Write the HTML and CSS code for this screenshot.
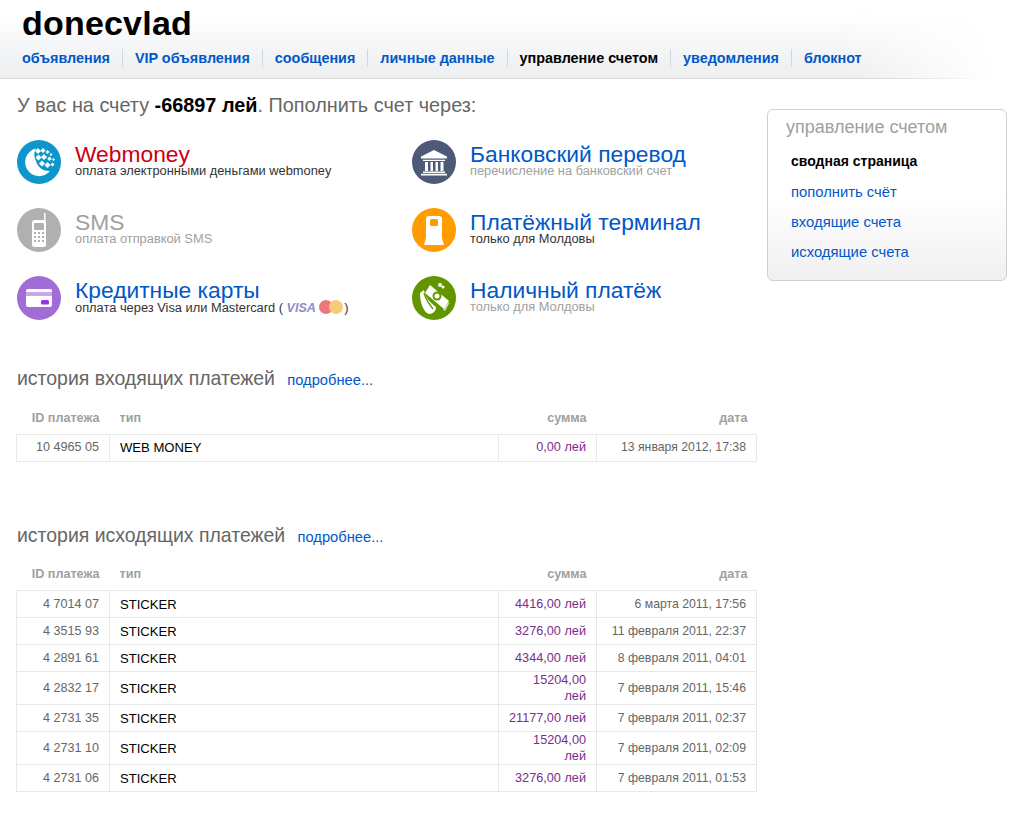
FILE: index.html
```html
<!DOCTYPE html>
<html lang="ru">
<head>
<meta charset="utf-8">
<title>donecvlad</title>
<link rel="stylesheet" href="styles.css">
</head>
<body>
<header class="top">
  <h1 class="user">donecvlad</h1>
  <nav class="nav">
    <a href="#">объявления</a>
    <a href="#">VIP объявления</a>
    <a href="#">сообщения</a>
    <a href="#">личные данные</a>
    <a href="#" class="current">управление счетом</a>
    <a href="#">уведомления</a>
    <a href="#">блокнот</a>
  </nav>
</header>
<div class="page">
  <main class="main">
    <p class="balance">У вас на счету <b>-66897 лей</b>. Пополнить счет через:</p>
    <div class="methods">
      <div class="method">
        <svg class="icon" viewBox="0 0 44 44"><circle cx="22" cy="22" r="22" fill="#0e96cb"/><path d="M19 8.500A14 14 0 1 0 33 31A13 13 0 0 1 19 21A13 13 0 0 1 19 8.500Z" fill="#fff"/><g fill="#fff"><path d="M21 8l3 3-3 3-3-3zM26 8l2.500 2.500-2.500 2.500-2.500-2.500zM30.500 10l2 2-2 2-2-2zM34 13l1.500 1.500-1.500 1.500-1.500-1.500zM21.500 14.500l3 3-3 3-3-3zM27 14l3 3-3 3-3-3zM32.500 16.500l2.300 2.300-2.300 2.300-2.300-2.300zM36.500 18l1.500 1.500-1.500 1.500-1.500-1.500zM25 20.500l3 3-3 3-3-3zM30.500 22l3 3-3 3-3-3zM35.500 22.500l2 2-2 2-2-2z"/></g></svg>
        <div class="method-text"><a href="#" class="method-title red">Webmoney</a><span class="method-sub">оплата электронными деньгами webmoney</span></div>
      </div>
      <div class="method">
        <svg class="icon" viewBox="0 0 44 44"><circle cx="22" cy="22" r="22" fill="#4c5a78"/><path d="M22 10L35 16.500V18.500H9V16.500Z M11 19.800H33V21H11Z M11 31.500H33V33H11Z M9 33.800H35V35.500H9Z" fill="#fff"/><path d="M13 22h3v9h-3zM18.500 22h2.500v9h-2.500zM23.500 22h2.500v9h-2.500zM28.500 22h3v9h-3z" fill="#fff"/></svg>
        <div class="method-text"><a href="#" class="method-title">Банковский перевод</a><span class="method-sub muted">перечисление на банковский счет</span></div>
      </div>
      <div class="method">
        <svg class="icon" viewBox="0 0 44 44"><circle cx="22" cy="22" r="22" fill="#b0b0b0"/><path d="M27 5h1.500v8H27z" fill="#fff"/><rect x="15" y="12" width="14" height="27" rx="2.500" fill="#fff"/><rect x="17" y="15" width="10" height="7" rx="1" fill="#b0b0b0"/><g fill="#b0b0b0"><path d="M17 24h2v2h-2zM21 24h2v2h-2zM25 24h2v2h-2zM17 28h2v2h-2zM21 28h2v2h-2zM25 28h2v2h-2zM17 32h2v2h-2zM21 32h2v2h-2zM25 32h2v2h-2z"/></g></svg>
        <div class="method-text"><a href="#" class="method-title gray">SMS</a><span class="method-sub muted">оплата отправкой SMS</span></div>
      </div>
      <div class="method">
        <svg class="icon" viewBox="0 0 44 44"><circle cx="22" cy="22" r="22" fill="#ff9c00"/><path d="M17 8h10a3 3 0 0 1 3 3v19l2 7H12l2-7V11a3 3 0 0 1 3-3Z" fill="#fff"/><rect x="18" y="11" width="8" height="7" rx="1.500" fill="#ff9c00"/></svg>
        <div class="method-text"><a href="#" class="method-title">Платёжный терминал</a><span class="method-sub">только для Молдовы</span></div>
      </div>
      <div class="method">
        <svg class="icon" viewBox="0 0 44 44"><circle cx="22" cy="22" r="22" fill="#a06cd5"/><rect x="9" y="13" width="26" height="18" rx="2" fill="#fff"/><rect x="9" y="16" width="26" height="4" fill="#c9a6ea"/><rect x="24" y="24" width="8" height="4.500" rx="1.500" fill="#9333ea"/></svg>
        <div class="method-text"><a href="#" class="method-title">Кредитные карты</a><span class="method-sub">оплата через Visa или Mastercard ( <span class="visa">VISA</span> <svg class="mc" viewBox="0 0 24 14"><circle cx="7" cy="7" r="7" fill="#f0767d"/><circle cx="17" cy="7" r="7" fill="#f8cb7c"/></svg>)</span></div>
      </div>
      <div class="method">
        <svg class="icon" viewBox="0 0 44 44"><circle cx="22" cy="22" r="22" fill="#629600"/><path d="M18 9L37 25L32 33L13 17Z" fill="#fff"/><path d="M35 28l3-2-5 9-2-1z" fill="#d4e3b8"/><circle cx="25" cy="20" r="4.500" fill="#629600"/><circle cx="25" cy="20" r="2.500" fill="#fff"/><circle cx="28" cy="9" r="2" fill="#fff"/><circle cx="31" cy="11" r="1.500" fill="#fff"/><path d="M8 17L12 14C13 20 17 26 24 31C24 35 21 38 17 38C11 36 8 26 8 17Z" fill="#fff"/><path d="M12 17C14 24 17 28 21 33" stroke="#629600" stroke-width="1.300" fill="none"/></svg>
        <div class="method-text"><a href="#" class="method-title">Наличный платёж</a><span class="method-sub muted">только для Молдовы</span></div>
      </div>
    </div>

    <section class="history">
      <h2 class="history-title">история входящих платежей <a href="#">подробнее...</a></h2>
      <table class="pay">
        <thead><tr><th class="c-id">ID платежа</th><th class="c-type">тип</th><th class="c-sum">сумма</th><th class="c-date">дата</th></tr></thead>
        <tbody>
          <tr><td class="c-id">10 4965 05</td><td class="c-type">WEB MONEY</td><td class="c-sum">0,00 лей</td><td class="c-date">13 января 2012, 17:38</td></tr>
        </tbody>
      </table>
    </section>

    <section class="history out">
      <h2 class="history-title">история исходящих платежей <a href="#">подробнее...</a></h2>
      <table class="pay">
        <thead><tr><th class="c-id">ID платежа</th><th class="c-type">тип</th><th class="c-sum">сумма</th><th class="c-date">дата</th></tr></thead>
        <tbody>
          <tr><td class="c-id">4 7014 07</td><td class="c-type">STICKER</td><td class="c-sum">4416,00 лей</td><td class="c-date">6 марта 2011, 17:56</td></tr>
          <tr><td class="c-id">4 3515 93</td><td class="c-type">STICKER</td><td class="c-sum">3276,00 лей</td><td class="c-date">11 февраля 2011, 22:37</td></tr>
          <tr><td class="c-id">4 2891 61</td><td class="c-type">STICKER</td><td class="c-sum">4344,00 лей</td><td class="c-date">8 февраля 2011, 04:01</td></tr>
          <tr><td class="c-id">4 2832 17</td><td class="c-type">STICKER</td><td class="c-sum">15204,00<br>лей</td><td class="c-date">7 февраля 2011, 15:46</td></tr>
          <tr><td class="c-id">4 2731 35</td><td class="c-type">STICKER</td><td class="c-sum">21177,00 лей</td><td class="c-date">7 февраля 2011, 02:37</td></tr>
          <tr><td class="c-id">4 2731 10</td><td class="c-type">STICKER</td><td class="c-sum">15204,00<br>лей</td><td class="c-date">7 февраля 2011, 02:09</td></tr>
          <tr><td class="c-id">4 2731 06</td><td class="c-type">STICKER</td><td class="c-sum">3276,00 лей</td><td class="c-date">7 февраля 2011, 01:53</td></tr>
        </tbody>
      </table>
    </section>
  </main>
  <aside class="side">
    <h3 class="side-title">управление счетом</h3>
    <ul class="side-menu">
      <li class="active"><a href="#">сводная страница</a></li>
      <li><a href="#">пополнить счёт</a></li>
      <li><a href="#">входящие счета</a></li>
      <li><a href="#">исходящие счета</a></li>
    </ul>
  </aside>
</div>
</body>
</html>
```
FILE: styles.css
```css
* { box-sizing: border-box; }
html, body { margin: 0; padding: 0; }
body { font-family: "Liberation Sans", Arial, sans-serif; background: #fff; color: #000; height: 816px; overflow: hidden; }
a { color: #0058c8; text-decoration: none; }

.top { height: 79px; padding: 2px 0 0 22px; border-bottom: 1px solid transparent; border-image: linear-gradient(to right, #d8d8d8 0, #d8d8d8 86%, #fff 97%) 1; background: linear-gradient(to right, rgba(255,255,255,0) 82%, #fff 97%), linear-gradient(to bottom, #fff 15%, #f6f7f8 55%, #eceef0 100%); }
.user { margin: 0; font-size: 34px; letter-spacing: 0.2px; line-height: 42px; font-weight: bold; color: #000; }
.nav { display: flex; margin-top: 5px; height: 18px; align-items: center; }
.nav a { font-size: 14.4px; font-weight: bold; line-height: 18px; padding-right: 12px; margin-right: 12px; border-right: 1px solid #d5d6d8; white-space: nowrap; }
.nav a:last-child { border-right: 0; }
.nav a.current { color: #000; }

.page { display: flex; padding-left: 17px; }
.main { width: 740px; flex: none; }
.balance { margin: 15px 0 0; font-size: 19.85px; line-height: 22px; color: #666; }
.balance b { color: #000; }

.methods { display: grid; grid-template-columns: 395px 345px; grid-auto-rows: 44px; row-gap: 24px; margin-top: 24px; }
.method { display: flex; }
.icon { width: 44px; height: 44px; flex: none; display: block; margin-right: 14px; }
.method-text { display: flex; flex-direction: column; padding-top: 2px; }
.method-title { font-size: 22.8px; line-height: 24px; white-space: nowrap; }
.method-title.red { color: #cc0011; }
.method-title.gray { color: #a0a0a0; }
.method-sub { font-size: 12.85px; line-height: 13px; color: #333; white-space: nowrap; margin-top: -2px; }
.method-sub.muted { color: #a0a0a0; }
.visa { font-style: italic; font-weight: bold; color: #8c8cc8; font-size: 12.5px; }
.mc { width: 24px; height: 14px; vertical-align: -2px; margin-right: 1px; }

.history { margin-top: 47px; }
.history.out { margin-top: 62px; }
.history-title { margin: 0; font-size: 19.45px; line-height: 22px; font-weight: normal; color: #666; }
.history-title a { font-size: 14.7px; margin-left: 7px; }

.pay { width: 740px; margin: 13px 0 0 -1px; border-collapse: collapse; table-layout: fixed; }
.pay th { height: 30px; font-size: 12.6px; font-weight: bold; color: #a0a0a0; padding: 0 10px 2px; line-height: 16px; }
.pay td { height: 27px; padding: 1px 10px 0; line-height: 15.5px; border: 1px solid #e8e8e8; color: #666; font-size: 12.6px; }
.c-id { width: 93px; text-align: right; }
.c-type { width: 389px; text-align: left; }
.c-sum { width: 98px; text-align: right; white-space: nowrap; }
.c-date { width: 160px; text-align: right; white-space: nowrap; }
.pay th.c-date { padding-right: 9px; }
.pay td.c-type { color: #000; font-size: 13.1px; }
.pay td.c-sum { color: #7b2d8b; font-size: 12.7px; }
.pay td.c-date { font-size: 12.25px; }

.side { width: 240px; height: 172px; margin: 30px 0 0 10px; border: 1px solid #cfcfcf; border-radius: 6px; padding: 6px 18px 0; background: linear-gradient(to bottom, #fff 0, #fff 50%, #f0f0f0 100%); }
.side-title { margin: 0; font-size: 18px; line-height: 22px; font-weight: normal; color: #a0a0a0; }
.side-menu { list-style: none; margin: 14px 0 0; padding: 0 0 0 5px; }
.side-menu li { font-size: 14.8px; line-height: 18px; margin-bottom: 12px; }
.side-menu .active { font-size: 14px; margin-bottom: 13px; }
.side-menu .active a { color: #000; font-weight: bold; }
```
